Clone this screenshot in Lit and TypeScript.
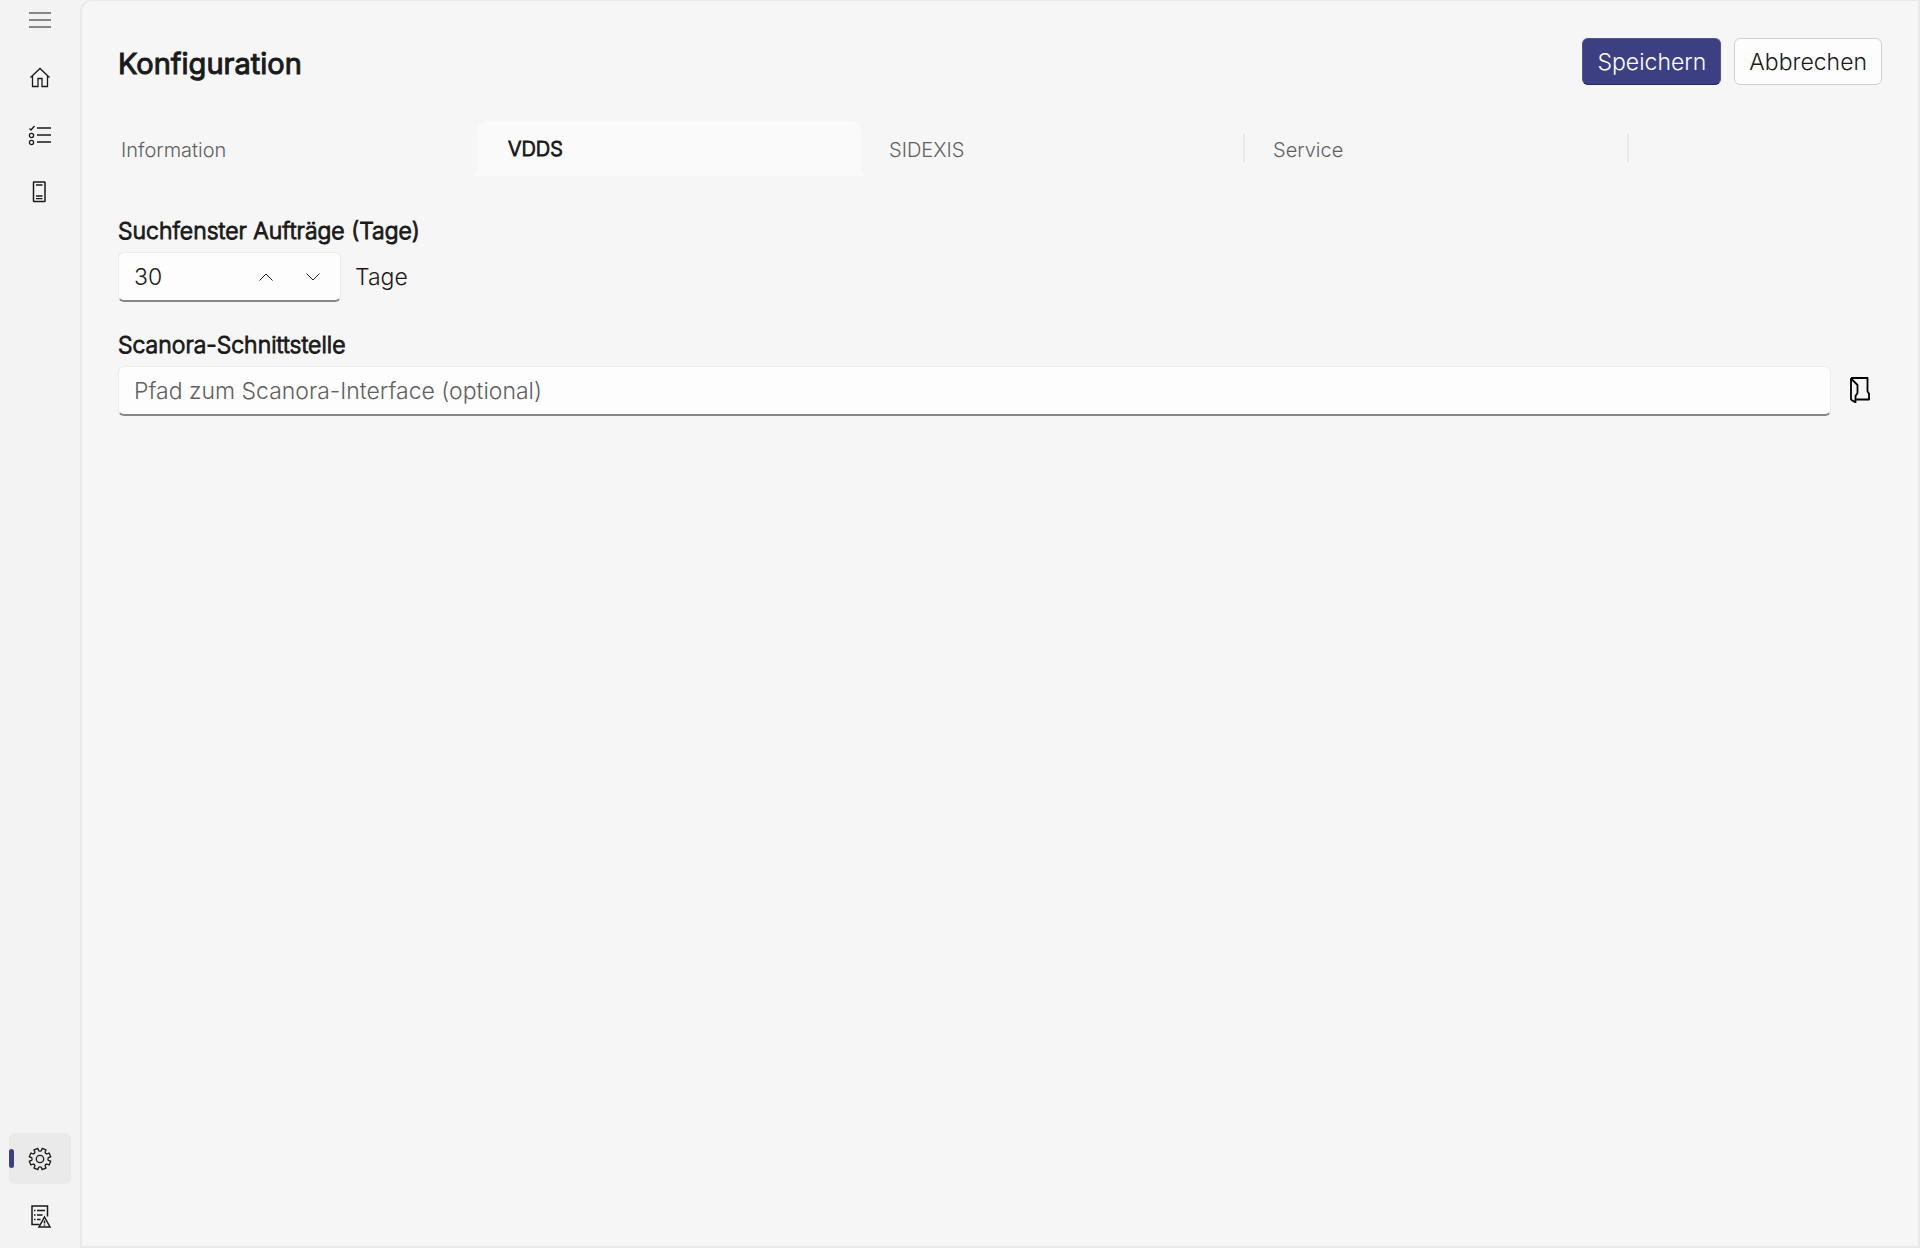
import { LitElement, html, css, svg } from "lit";
import { customElement, state } from "lit/decorators.js";
import { classMap } from "lit/directives/class-map.js";

const icons = {
  menu: svg`<path stroke="#666" stroke-width="1.5" d="M1 5h22M1 12h22M1 19h22"/>`,
  home: svg`<path d="M2.500 11.500 12 2.500l9.500 9M4.500 10v10.500h5.500v-8h4v8h5.500V10"/>`,
  tasks: svg`<path d="m1.500 5.500 1.500 1.500 3.500-4"/><circle cx="3.500" cy="12.500" r="2.100"/><circle cx="3.500" cy="19.500" r="2.100"/><path d="M9 5h14M9 12h14M9 19h14"/>`,
  device: svg`<rect x="5.500" y="2" width="11.500" height="19.500" rx=".5" stroke-width="1.500"/><path d="M8 5h6.500M8 16h6.500M8 18.700h6.500"/>`,
  gear: svg`<circle cx="12" cy="12" r="3.700"/><path d="M9.800 1.300 L10.700 3.700 Q12 4.600 13.300 3.700 L14.200 1.300 L18.000 2.900 L17.000 5.200 Q17.300 6.700 18.800 7.000 L21.100 6.000 L22.700 9.800 L20.300 10.700 Q19.400 12 20.300 13.300 L22.700 14.200 L21.100 18.000 L18.800 17.000 Q17.300 17.300 17.000 18.800 L18.000 21.100 L14.200 22.700 L13.300 20.300 Q12 19.400 10.700 20.300 L9.800 22.700 L6.000 21.100 L7.000 18.800 Q6.700 17.300 5.200 17.000 L2.900 18.000 L1.300 14.200 L3.700 13.300 Q4.600 12 3.700 10.700 L1.300 9.800 L2.900 6.000 L5.200 7.000 Q6.700 6.700 7.000 5.200 L6.000 2.900 Z" stroke-linejoin="round"/>`,
  log: svg`<path stroke-width="1.500" d="M11.500 20.500H4V2h15.500v10.500"/><path stroke-width="1.500" d="M9 6.500h8M9 11h5.500M9 15.500h3.500M6 6.500h1.500M6 11h1.500M6 15.500h1.500"/><path stroke-width="1.500" d="M16.500 13 22 23H11Z"/><path stroke-width="1.500" d="M16.500 16.500v3M16.500 20.500v1.200"/>`,
};

@customElement("app-root")
export class AppRoot extends LitElement {
  @state() private tab = "VDDS";
  @state() private days = 30;

  static styles = css`
    * { box-sizing: border-box; }
    :host {
      display: grid;
      grid-template-columns: 80px 1fr;
      min-height: 100vh;
      background: #f3f3f3;
      color: #1a1a1a;
      font-family: Inter, "Liberation Sans", sans-serif;
      font-size: 23px;
      line-height: 32px;
      font-weight: 300;
    }
    button, input { font: inherit; color: inherit; margin: 0; }
    button { border: 0; background: none; padding: 0; cursor: pointer; }
    svg { fill: none; stroke: #1a1a1a; stroke-width: 1.3; display: block; }
    .rail { display: flex; flex-direction: column; align-items: center; gap: 6px; padding-bottom: 7px; }
    .item {
      width: 62px; height: 51px; border-radius: 6px;
      display: flex; align-items: center; justify-content: center;
      position: relative;
    }
    .menu { height: 40px; margin-bottom: 6px; }
    .spacer { flex: 1; }
    .current { background: #eaeaea; }
    .current::before {
      content: ""; position: absolute; left: 0; top: 16px;
      width: 5px; height: 19px; border-radius: 3px; background: #3c4083;
    }
    main {
      background: #f6f6f6;
      border: solid #e9e9e9; border-width: 1px 2px 2px 2px;
      border-radius: 12px 0 0 0;
      padding: 37px 36px 36px;
      display: flex; flex-direction: column;
    }
    header { display: flex; align-items: center; justify-content: space-between; }
    h1 { margin: 0; padding-top: 4px; font-size: 29px; line-height: 40px; font-weight: 400; -webkit-text-stroke: 1px; }
    .actions { display: flex; gap: 13px; }
    .btn {
      height: 47px; padding: 0 14px; border-radius: 6px;
      border: 1px solid #d0d0d0; background: #fdfdfd;
    }
    .primary {
      color: #fff; background: #3c4083; border: 1px solid #50548f; border-bottom-color: #25285a;
    }
    .tabs { display: grid; grid-template-columns: repeat(4, 384px); margin: 36px 0 0 -25px; }
    .tab {
      height: 55px; padding: 2px 28px 0; text-align: left;
      font-size: 20px; line-height: 24px; color: #606060;
      position: relative;
    }
    .divided::after {
      content: ""; position: absolute; right: 0; top: 12px;
      width: 2px; height: 30px; background: #eaeaea;
    }
    .selected {
      padding: 0 31px; background: #fafafa; color: #1a1a1a;
      border-radius: 10px 10px 0 0; -webkit-text-stroke: 1px;
    }
    .selected::before, .selected::after {
      content: ""; position: absolute; bottom: 0; width: 6px; height: 6px;
    }
    .selected::before { left: -6px; background: radial-gradient(circle at 0 0, transparent 6px, #fafafa 6px); }
    .selected::after { right: -6px; background: radial-gradient(circle at 100% 0, transparent 6px, #fafafa 6px); }
    .field { display: flex; flex-direction: column; gap: 5px; margin-top: 39px; }
    .field + .field { margin-top: 27px; }
    label.name { -webkit-text-stroke: 1px; }
    .row { display: flex; align-items: center; gap: 14px; }
    .box {
      height: 50px; display: flex; align-items: center;
      background: #fdfdfd; border: 1px solid #ececec; border-bottom: 2px solid #868686;
      border-radius: 6px; overflow: hidden;
    }
    .number { width: 223px; }
    .path { flex: 1; }
    input {
      flex: 1; min-width: 0; height: 100%; padding: 1px 15px 0;
      border: 0; outline: 0; background: none; appearance: textfield;
    }
    input::-webkit-inner-spin-button { appearance: none; }
    input::placeholder { color: #606060; opacity: 1; }
    .step { width: 47px; height: 40px; display: flex; align-items: center; justify-content: center; }
    .step svg { stroke-width: 1; }
    .step:last-child { margin-right: 4px; }
    .browse { width: 37px; height: 49px; padding: 0 8px 2px 5px; display: flex; align-items: center; }
    .browse svg { stroke: #000; stroke-width: 1.8; stroke-linejoin: round; }
  `;

  private item(label: string, icon: unknown, extra = {}) {
    return html`<button class=${classMap({ item: true, ...extra })} aria-label=${label}>
      <svg width="24" height="24" viewBox="0 0 24 24" aria-hidden="true">${icon}</svg>
    </button>`;
  }

  render() {
    const tabs = ["Information", "VDDS", "SIDEXIS", "Service"];
    return html`
      <nav class="rail">
        ${this.item("Menü", icons.menu, { menu: true })}
        ${this.item("Start", icons.home)}
        ${this.item("Aufträge", icons.tasks)}
        ${this.item("Gerät", icons.device)}
        <div class="spacer"></div>
        ${this.item("Konfiguration", icons.gear, { current: true })}
        ${this.item("Protokoll", icons.log)}
      </nav>
      <main>
        <header>
          <h1>Konfiguration</h1>
          <div class="actions">
            <button class="btn primary">Speichern</button>
            <button class="btn">Abbrechen</button>
          </div>
        </header>
        <div class="tabs" role="tablist">
          ${tabs.map((t, i) => html`<button role="tab" aria-selected=${t === this.tab}
            class=${classMap({ tab: true, selected: t === this.tab, divided: t !== this.tab && tabs[i + 1] !== this.tab })}
            @click=${() => (this.tab = t)}>${t}</button>`)}
        </div>
        <div class="field">
          <label class="name" for="days">Suchfenster Aufträge (Tage)</label>
          <div class="row">
            <div class="box number">
              <input id="days" type="number" .value=${String(this.days)}
                @change=${(e: Event) => (this.days = Number((e.target as HTMLInputElement).value))}>
              <button class="step" aria-label="Erhöhen" @click=${() => this.days++}>
                <svg width="14" height="8" viewBox="0 0 14 8"><path d="m.5 7.500 6.500-6.500 6.500 6.500"/></svg>
              </button>
              <button class="step" aria-label="Verringern" @click=${() => this.days--}>
                <svg width="14" height="8" viewBox="0 0 14 8"><path d="m.5.500 6.500 6.500 6.500-6.500"/></svg>
              </button>
            </div>
            <span>Tage</span>
          </div>
        </div>
        <div class="field">
          <label class="name" for="path">Scanora-Schnittstelle</label>
          <div class="row">
            <div class="box path">
              <input id="path" type="text" placeholder="Pfad zum Scanora-Interface (optional)">
            </div>
            <button class="browse" aria-label="Durchsuchen">
              <svg width="20" height="26" viewBox="0 0 20 26">
                <path d="M1 1h16.500v13.500l1.500 2v6H6.500M1 1v21.500l4.500 3V19l2-3V8L1 1.500"/>
              </svg>
            </button>
          </div>
        </div>
      </main>
    `;
  }
}
